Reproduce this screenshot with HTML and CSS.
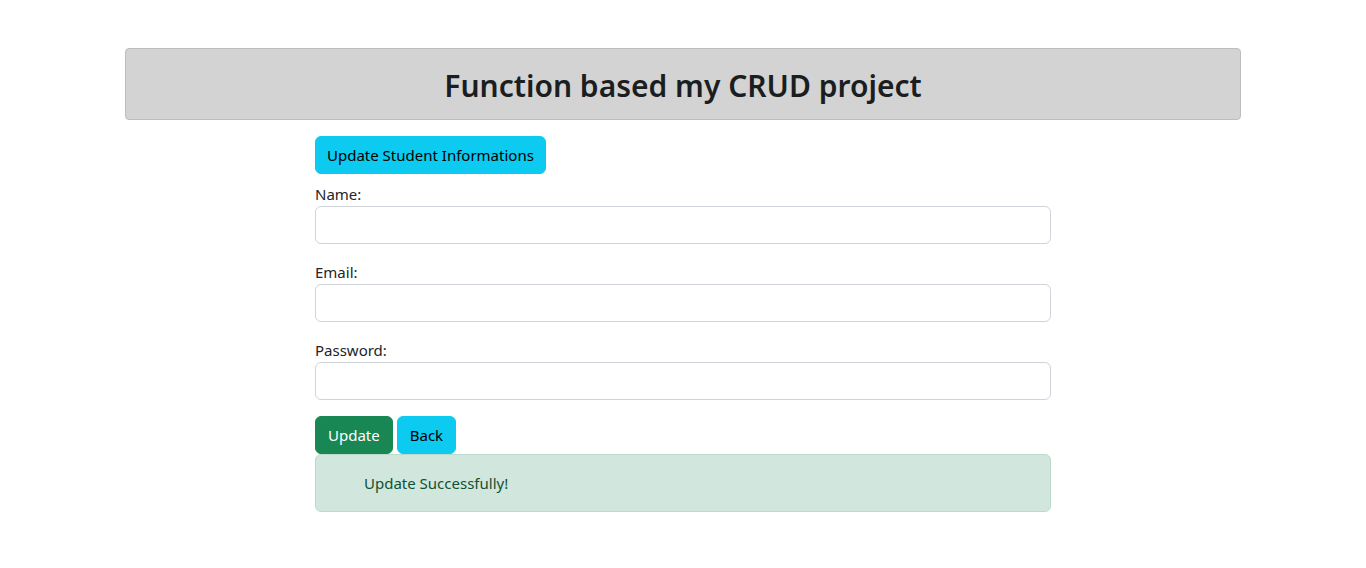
FILE: index.html
```html
<!DOCTYPE html>
<html lang="en">
<head>
<meta charset="utf-8">
<title>CRUD</title>
<link rel="stylesheet" href="styles.css">
</head>
<body>
<div class="container">
  <h2 class="title">Function based my CRUD project</h2>
  <div class="col">
    <button class="btn btn-info head-btn">Update Student Informations</button>
    <form class="form">
      <div class="field">
        <label>Name:</label>
        <input type="text" class="input">
      </div>
      <div class="field">
        <label>Email:</label>
        <input type="email" class="input">
      </div>
      <div class="field">
        <label>Password:</label>
        <input type="password" class="input">
      </div>
      <div class="actions">
        <button type="button" class="btn btn-success">Update</button>
        <button type="button" class="btn btn-info">Back</button>
      </div>
    </form>
    <div class="alert">
      <ul class="messages"><li>Update Successfully!</li></ul>
    </div>
  </div>
</div>
</body>
</html>
```

FILE: styles.css
```css
* { box-sizing: border-box; }
body {
  margin: 0;
  font-family: "Noto Sans", "Open Sans", sans-serif;
  font-size: 15px;
  line-height: 24px;
  color: #212529;
  background: #fff;
}
.container {
  width: 1140px;
  margin: 0 auto;
  padding: 48px 12px 0;
}
.title {
  margin: 0;
  height: 72px;
  padding-top: 3px;
  display: flex;
  align-items: center;
  justify-content: center;
  background: #d3d3d3;
  border: 1px solid #bdbdbd;
  border-radius: 4px;
  font-size: 30px;
  font-weight: 600;
  color: #1b1e21;
}
.col {
  width: 736px;
  margin: 16px 0 0 190px;
}
.btn {
  height: 38px;
  padding: 0 12px;
  border: 1px solid transparent;
  border-radius: 6px;
  font-family: inherit;
  font-size: 15px;
  line-height: 24px;
}
.btn-info {
  background: #0dcaf0;
  border-color: #0dcaf0;
  color: #000;
}
.btn-success {
  background: #198754;
  border-color: #198754;
  color: #fff;
}
.head-btn { display: block; margin-bottom: 8px; padding: 0 11px; }
.form { margin: 0; }
.field { margin-bottom: 16px; }
.field label { display: block; height: 24px; }
.input {
  display: block;
  width: 100%;
  height: 38px;
  border: 1px solid #ced4da;
  border-radius: 6px;
  padding: 6px 12px;
  font-family: inherit;
  font-size: 15px;
}
.actions { display: flex; gap: 4px; }
.alert {
  background: #d1e7dd;
  border: 1px solid #badbcc;
  border-radius: 6px;
  color: #0f5132;
  padding: 16px;
}
.messages {
  margin: 0;
  padding-left: 32px;
  list-style: none;
}
```
